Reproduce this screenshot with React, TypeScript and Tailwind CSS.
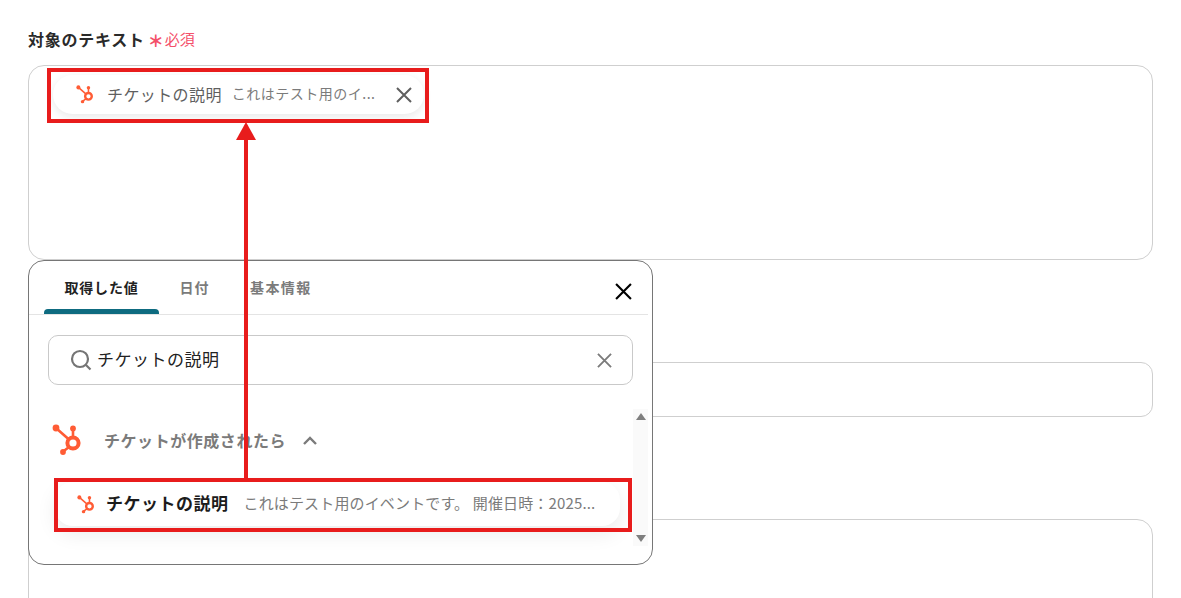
const HubspotIcon = ({ className }: { className: string }) => (
  <svg viewBox="0 0 32 32" className={className} fill="none">
    <circle cx="21" cy="19" r="5.6" stroke="#ff5c35" strokeWidth="4" />
    <path d="M21 4.5V12M4.5 4.5L17 15.5M17 23L10.5 28" stroke="#ff5c35" strokeWidth="2.6" />
    <circle cx="4" cy="4" r="3.4" fill="#ff5c35" />
    <circle cx="21" cy="4.5" r="2.9" fill="#ff5c35" />
    <circle cx="11" cy="28" r="2.9" fill="#ff5c35" />
  </svg>
);

const Cross = ({ className, width = 2 }: { className: string; width?: number }) => (
  <svg viewBox="0 0 16 16" className={className} fill="none" stroke="currentColor" strokeWidth={width}>
    <path d="M1 1L15 15M15 1L1 15" />
  </svg>
);

const Tabs = () => (
  <div className="relative mr-[4px] flex h-[54px] items-stretch border-b border-[#e4e4e4] pl-[15px]">
    <div className="relative flex w-[115px] items-center justify-center text-[14px] font-bold tracking-[0.8px] text-[#222]">
      取得した値
      <div className="absolute bottom-0 left-0 right-0 h-[5px] rounded-t-[4px] bg-[#0e6b80]"></div>
    </div>
    <div className="flex w-[71px] items-center justify-center text-[14px] font-bold tracking-[1px] text-[#7b7b7b]">日付</div>
    <div className="flex items-center pl-[20px] text-[14px] font-bold tracking-[1.4px] text-[#7b7b7b]">基本情報</div>
    <Cross className="absolute right-[16px] top-[22px] h-[17px] w-[17px] text-black" />
  </div>
);

const SearchBox = () => (
  <div className="mx-[19px] mt-[20px] flex h-[50px] items-center rounded-[10px] border border-[#c9c9c9] pl-[21px] pr-[20px]">
    <svg viewBox="0 0 22 22" className="h-[22px] w-[22px]" fill="none" stroke="#757575" strokeWidth="2.2">
      <circle cx="10" cy="10" r="8" />
      <path d="M16 16L20.5 20.5" />
    </svg>
    <span className="ml-[5px] flex-1 pb-[3px] text-[17px] tracking-[0.5px] text-[#222]">チケットの説明</span>
    <Cross className="h-[15px] w-[15px] text-[#7b7b7b]" />
  </div>
);

const ValueRow = () => (
  <div className="mt-[18px] flex items-center pl-[26px]">
    <div className="flex h-[44px] w-[565px] items-center rounded-[18px] bg-white pl-[22px] shadow-[0_8px_20px_rgba(0,0,0,0.08)]">
      <HubspotIcon className="h-[19px] w-[19px]" />
      <span className="ml-[10px] pb-[2px] text-[17px] font-bold tracking-[0.5px] text-[#1c1c1c]">チケットの説明</span>
      <span className="ml-[15px] pb-[2px] text-[15px] tracking-[0.15px] text-[#7b7b7b]">これはテスト用のイベントです。 開催日時：2025...</span>
    </div>
  </div>
);

const Popup = () => (
  <div className="absolute left-[28px] top-[260px] h-[305px] w-[625px] overflow-hidden rounded-[16px] border border-[#767676] bg-white">
    <Tabs />
    <SearchBox />
    <div className="mt-[31px] flex h-[48px] items-center pl-[23px]">
      <HubspotIcon className="h-[32px] w-[32px]" />
      <span className="ml-[20px] text-[16px] font-bold tracking-[0.55px] text-[#7b7b7b]">チケットが作成されたら</span>
      <svg viewBox="0 0 14 9" className="ml-[17px] h-[9px] w-[14px]" fill="none" stroke="#7b7b7b" strokeWidth="2.4">
        <path d="M1 8L7 2L13 8" />
      </svg>
    </div>
    <ValueRow />
    <div className="absolute bottom-[18px] right-[4px] top-[148px] flex w-[15px] flex-col items-center justify-between bg-[#fafafa] py-[4px]">
      <div className="h-0 w-0 border-x-[5px] border-b-[7px] border-x-transparent border-b-[#7f7f7f]"></div>
      <div className="h-0 w-0 border-x-[5px] border-t-[7px] border-x-transparent border-t-[#7f7f7f]"></div>
    </div>
  </div>
);

const Annotations = () => (
  <>
    <div className="absolute left-[47px] top-[68px] h-[55px] w-[382px] border-[4px] border-[#e81c1c]"></div>
    <div className="absolute left-[54px] top-[478px] h-[54px] w-[578px] border-[4px] border-[#e81c1c]"></div>
    <div className="absolute left-[244px] top-[138px] h-[340px] w-[4px] bg-[#e81c1c]"></div>
    <div className="absolute left-[236px] top-[122px] h-0 w-0 border-x-[10px] border-b-[18px] border-x-transparent border-b-[#e81c1c]"></div>
  </>
);

export default function App() {
  return (
    <div className="relative h-[598px] w-[1181px] overflow-hidden bg-white font-['Noto_Sans_CJK_JP','Noto_Sans',sans-serif]">
      <div className="px-[28px] pt-[27px]">
        <div className="flex h-[24px] items-center">
          <span className="text-[16px] font-bold tracking-[0.75px] text-[#2a2a2a]">対象のテキスト</span>
          <span className="ml-[3px] mt-[2px] text-[16px] font-black leading-none text-[#f4506a]">＊</span>
          <span className="ml-[1px] text-[15px] text-[#f4506a]">必須</span>
        </div>
        <div className="mt-[14px] h-[195px] rounded-[16px] border border-[#cfcfcf] pl-[24px] pt-[9px]">
          <div className="flex h-[39px] w-[371px] items-center rounded-[20px] bg-white pl-[23px] shadow-[0_3px_10px_rgba(0,0,0,0.09)]">
            <HubspotIcon className="h-[19px] w-[19px]" />
            <span className="ml-[12px] pb-[2px] text-[16px] tracking-[0.4px] text-[#5f5f5f]">チケットの説明</span>
            <span className="ml-[10px] pb-[2px] text-[14px] tracking-[0.5px] text-[#7b7b7b]">これはテスト用のイ...</span>
            <Cross className="ml-[20px] h-[16px] w-[16px] text-[#5f5f5f]" />
          </div>
        </div>
        <div className="mt-[102px] h-[55px] rounded-[12px] border border-[#cfcfcf]"></div>
        <div className="mt-[102px] h-[120px] rounded-[16px] border border-[#cfcfcf]"></div>
      </div>
      <Popup />
      <Annotations />
    </div>
  );
}
